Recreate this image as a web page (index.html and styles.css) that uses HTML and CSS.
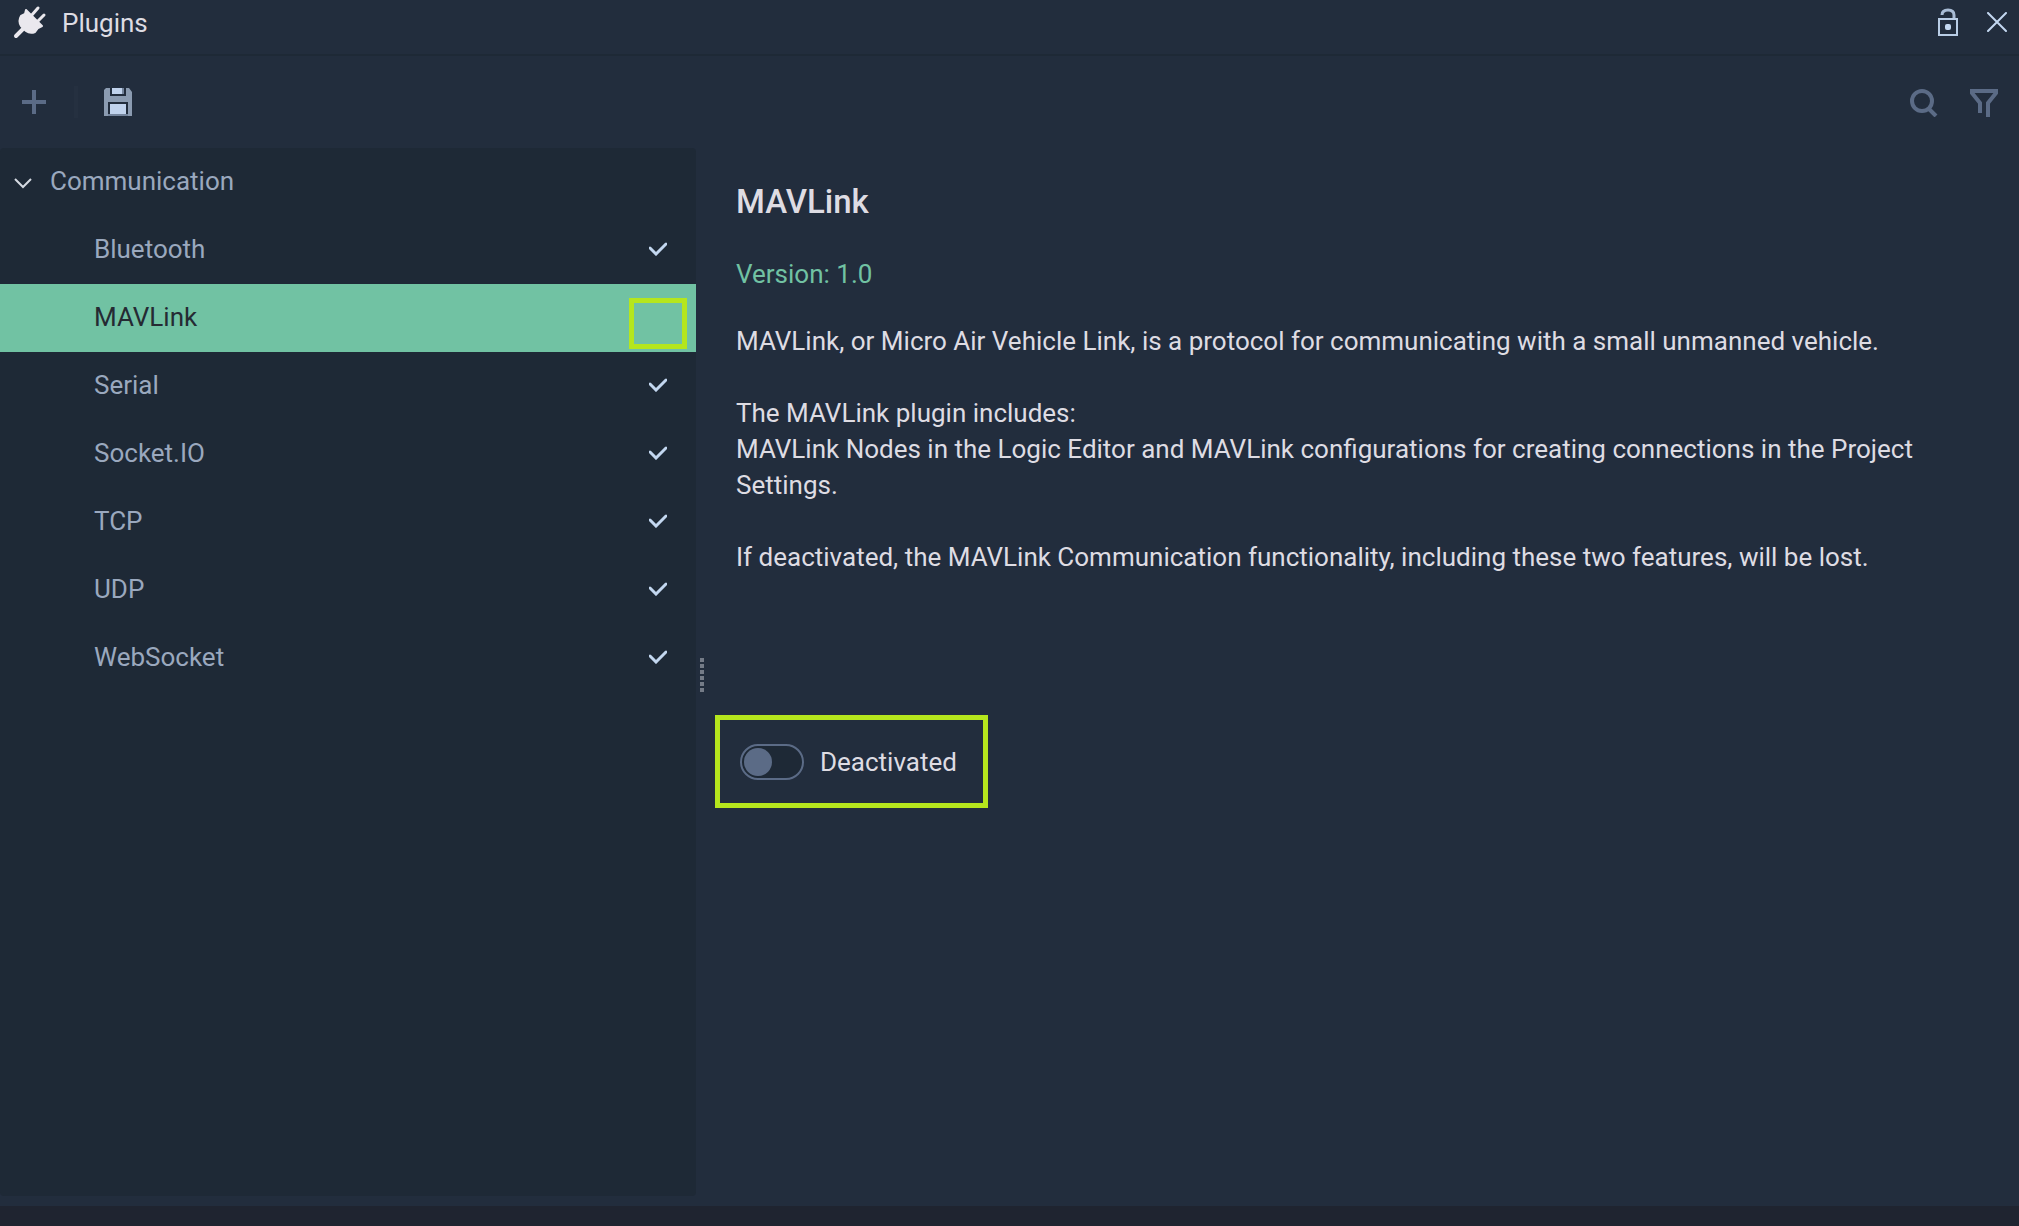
FILE: index.html
```html
<!DOCTYPE html>
<html lang="en">
<head>
<meta charset="utf-8">
<title>Plugins</title>
<link rel="stylesheet" href="styles.css">
</head>
<body>
<div class="window">
  <header class="titlebar">
    <svg class="icon" width="34" height="34" viewBox="0 0 34 34" aria-hidden="true"><g fill="#eae8ee" stroke="#eae8ee" stroke-linecap="round" stroke-linejoin="round"><path d="M3 31 L12 22" stroke-width="4" fill="none"/><path d="M18 11 L25 3 M24 17 L31 10" stroke-width="3" fill="none"/><path d="M13 5 L29 21 L25 23 L22 27 Q17 29 13 26 L8 21 Q5 16 8 11 L12 9 Z" stroke-width="2"/></g></svg>
    <h1 class="title">Plugins</h1>
    <button class="icon-button" type="button" aria-label="Unlock"><svg width="22" height="30" viewBox="0 0 22 30"><path d="M5 8 Q5 3 11 3 Q17 3 17 8 V12" fill="none" stroke="#a9bcd5" stroke-width="3"/><path d="M2 12 H20 V28 H2 Z" fill="none" stroke="#b9cde6" stroke-width="2"/><rect x="8" y="17" width="6" height="6" rx="2" fill="#c3d7f0"/></svg></button>
    <button class="icon-button" type="button" aria-label="Close"><svg width="20" height="20" viewBox="0 0 20 20"><path d="M1 1 L19 19 M19 1 L1 19" stroke="#c3d7f0" stroke-width="2" stroke-linecap="round"/></svg></button>
  </header>
  <div class="toolbar">
    <button class="icon-button" type="button" aria-label="Add"><svg width="24" height="24" viewBox="0 0 24 24"><path d="M0 12 H24 M12 0 V24" stroke="#5b6b86" stroke-width="4"/></svg></button>
    <span class="divider"></span>
    <button class="icon-button" type="button" aria-label="Save"><svg width="28" height="28" viewBox="0 0 28 28"><path d="M2 0 H6 V8 H22 V0 H25 L28 4 V28 H24 V14 H4 V28 H0 V2 Z" fill="#8b9bb1"/><path d="M8 0 H20 V6 H8 Z M6 16 H22 V26 H6 Z" fill="#c0d2ec"/><path d="M18 0 H20 V6 H18 Z M4 26 H24 V28 H4 Z" fill="#74849c"/></svg></button>
    <span class="spacer"></span>
    <button class="icon-button lookup" type="button" aria-label="Search"><svg width="28" height="28" viewBox="0 0 28 28"><circle cx="12" cy="12" r="10" fill="none" stroke="#5b6b86" stroke-width="4"/><path d="M19 20 L26 27" stroke="#5b6b86" stroke-width="4"/></svg></button>
    <button class="icon-button lookup" type="button" aria-label="Filter"><svg width="28" height="28" viewBox="0 0 28 28"><path d="M10 24 V14 L2 4 V2 H26 V4 L18 14 V28" fill="none" stroke="#5b6b86" stroke-width="4"/></svg></button>
  </div>
  <main class="content">
    <nav class="sidebar" aria-label="Plugins">
      <button class="row group" type="button" aria-expanded="true"><svg class="chevron" width="18" height="12" viewBox="0 0 18 12"><path d="M1 2 L9 10 L17 2" fill="none" stroke="#d5dae2" stroke-width="2"/></svg>Communication</button>
      <a class="row" href="#bluetooth">Bluetooth<svg class="check" width="18" height="14" viewBox="0 0 18 14"><path d="M1 6 L7 12 L17 2" /></svg></a>
      <a class="row selected" href="#mavlink" aria-current="true">MAVLink<span class="callout"></span></a>
      <a class="row" href="#serial">Serial<svg class="check" width="18" height="14" viewBox="0 0 18 14"><path d="M1 6 L7 12 L17 2" /></svg></a>
      <a class="row" href="#socketio">Socket.IO<svg class="check" width="18" height="14" viewBox="0 0 18 14"><path d="M1 6 L7 12 L17 2" /></svg></a>
      <a class="row" href="#tcp">TCP<svg class="check" width="18" height="14" viewBox="0 0 18 14"><path d="M1 6 L7 12 L17 2" /></svg></a>
      <a class="row" href="#udp">UDP<svg class="check" width="18" height="14" viewBox="0 0 18 14"><path d="M1 6 L7 12 L17 2" /></svg></a>
      <a class="row" href="#websocket">WebSocket<svg class="check" width="18" height="14" viewBox="0 0 18 14"><path d="M1 6 L7 12 L17 2" /></svg></a>
    </nav>
    <div class="splitter"><i></i><i></i><i></i><i></i><i></i><i></i></div>
    <section class="details">
      <h2 class="name">MAVLink</h2>
      <p class="version">Version: 1.0</p>
      <p>MAVLink, or Micro Air Vehicle Link, is a protocol for communicating with a small unmanned vehicle.</p>
      <p>The MAVLink plugin includes:<br>MAVLink Nodes in the Logic Editor and MAVLink configurations for creating connections in the Project Settings.</p>
      <p>If deactivated, the MAVLink Communication functionality, including these two features, will be lost.</p>
      <label class="activation"><input class="toggle" type="checkbox" role="switch">Deactivated</label>
    </section>
  </main>
  <footer class="footer"></footer>
</div>
</body>
</html>
```
FILE: styles.css
```css
* { box-sizing: border-box; }
body {
  margin: 0;
  background: #222d3d;
  color: #dedce3;
  font: 26px/36px Roboto, "Liberation Sans", sans-serif;
}
h1, h2, p { margin: 0; font-weight: 400; }
svg { display: block; flex: none; }
button {
  border: 0;
  padding: 0;
  background: none;
  color: inherit;
  font: inherit;
}
.window { display: flex; flex-direction: column; min-height: 100vh; }
.titlebar {
  display: flex;
  align-items: center;
  height: 56px;
  padding: 0 12px 10px 13px;
  border-bottom: 2px solid #1e2936;
}
.title { flex: 1; margin-left: 15px; padding-top: 2px; font-size: 26px; }
.titlebar .icon-button + .icon-button { margin-left: 28px; }
.toolbar {
  display: flex;
  align-items: center;
  height: 92px;
  padding: 0 21px 0 22px;
}
.lookup { padding-top: 2px; }
.divider { width: 4px; height: 32px; margin: 0 26px 0 28px; background: #253040; }
.spacer { flex: 1; }
.spacer + .icon-button { margin-right: 32px; }
.content { flex: 1; display: flex; }
.sidebar {
  display: flex;
  flex-direction: column;
  width: 696px;
  margin-bottom: 10px;
  border-radius: 4px;
  background: #1e2936;
  color: #9aa8be;
}
.row {
  display: flex;
  align-items: center;
  justify-content: space-between;
  height: 68px;
  padding: 0 29px 2px 94px;
  color: inherit;
  text-decoration: none;
}
.group { justify-content: flex-start; gap: 18px; padding: 0 14px 2px; }
.chevron { margin-top: 4px; }
.selected { padding-right: 9px; background: #71c2a3; color: #252a33; }
.check path {
  fill: none;
  stroke: #c3d7f0;
  stroke-width: 3;
  stroke-linecap: round;
}
.callout { width: 58px; height: 51px; margin-top: 13px; border: 5px solid #b5e61d; }
.splitter {
  display: flex;
  flex-direction: column;
  justify-content: center;
  gap: 2px;
  width: 19px;
  padding: 0 0 4px 4px;
}
.splitter i { width: 4px; height: 4px; background: #747b87; }
.details { flex: 1; padding: 36px 60px 0 0; }
.details p, .name { margin: 0 0 36px 21px; }
.details .name { font-size: 33px; font-weight: 500; }
.details .version { margin-bottom: 31px; color: #71c2a3; }
.activation {
  display: inline-flex;
  align-items: center;
  gap: 16px;
  height: 93px;
  margin-top: 104px;
  padding: 0 26px 0 20px;
  border: 5px solid #b5e61d;
}
.toggle {
  appearance: none;
  display: flex;
  width: 64px;
  height: 36px;
  margin: 0;
  padding: 2px;
  border: 2px solid #5b6b86;
  border-radius: 18px;
  background: #1e2936;
}
.toggle::before { content: ""; width: 28px; height: 28px; border-radius: 50%; background: #5b6b86; }
.toggle:checked { justify-content: flex-end; }
.footer { height: 20px; background: #1f2430; }
```
